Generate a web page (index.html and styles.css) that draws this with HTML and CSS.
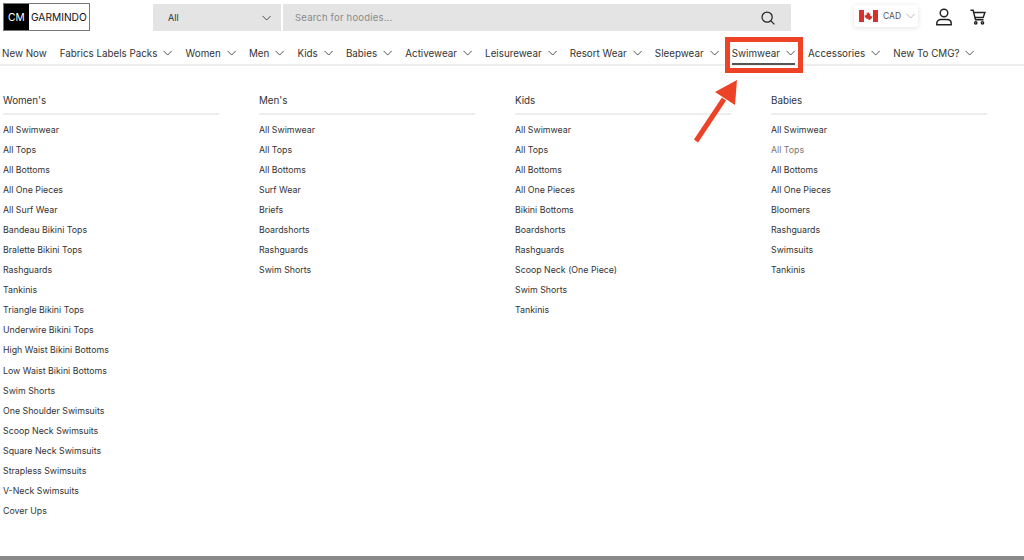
FILE: index.html
```html
<!DOCTYPE html>
<html lang="en">
<head>
  <meta charset="UTF-8" />
  <title>Swimwear menu</title>
  <link rel="stylesheet" href="styles.css">
</head>
<body>
  <svg width="0" height="0" class="defs">
    <symbol id="chev" viewBox="0 0 10 6"><path d="M.6.7 5 5.200 9.400.7" fill="none" stroke="currentColor" stroke-width=".9"/></symbol>
  </svg>

  <header class="top">
    <div class="logo"><span class="logo-cm">CM</span><span class="logo-name">GARMINDO</span></div>
    <div class="search">
      <div class="search-cat">All <svg class="chev"><use href="#chev"/></svg></div>
      <div class="search-box">
        <span>Search for hoodies...</span>
        <svg width="14" height="14" viewBox="0 0 16 16" fill="none" stroke="#222" stroke-width="1.4"><circle cx="7" cy="7" r="5.800"/><path d="m11.300 11.300 4 4"/></svg>
      </div>
    </div>
    <div class="currency">
      <svg width="19" height="12" viewBox="0 0 19 12"><rect width="19" height="12" fill="#fff"/><rect width="5" height="12" fill="#d5312b"/><rect x="14" width="5" height="12" fill="#d5312b"/><path d="M9.500 2.200 10.400 4l1-.5-.4 2.400 1-.4.4.9 1-.2-.4 1.500.4.4-2 .9.2.9-2-.2V10H9.300V8.700l-2 .2.2-.9-2-.9.4-.4-.4-1.500 1 .2.4-.9 1 .4-.4-2.400 1 .5z" fill="#d5312b"/></svg>
      <span>CAD</span>
      <svg class="chev light"><use href="#chev"/></svg>
    </div>
    <svg class="icon-user" width="18" height="18" viewBox="0 0 20 20" fill="none" stroke="#222" stroke-width="1.600"><circle cx="10" cy="5.600" r="4.200"/><path d="M2 18.600v-1.600c0-2.800 2.200-4.200 4.600-4.200h6.800c2.400 0 4.600 1.400 4.600 4.200v1.600z"/></svg>
    <svg class="icon-cart" width="16" height="16" viewBox="0 0 18 18" fill="none" stroke="#222" stroke-width="1.600"><path d="M.5 1.500h3l2.700 10.500h9"/><path d="M4.300 4h12.500l-2 5.500H5.600"/><circle cx="6.500" cy="15.500" r="1.300"/><circle cx="14" cy="15.500" r="1.300"/></svg>
  </header>

  <nav class="nav">
    <a>New Now</a>
    <a>Fabrics Labels Packs <svg class="chev"><use href="#chev"/></svg></a>
    <a>Women <svg class="chev"><use href="#chev"/></svg></a>
    <a>Men <svg class="chev"><use href="#chev"/></svg></a>
    <a>Kids <svg class="chev"><use href="#chev"/></svg></a>
    <a>Babies <svg class="chev"><use href="#chev"/></svg></a>
    <a>Activewear <svg class="chev"><use href="#chev"/></svg></a>
    <a>Leisurewear <svg class="chev"><use href="#chev"/></svg></a>
    <a>Resort Wear <svg class="chev"><use href="#chev"/></svg></a>
    <a>Sleepwear <svg class="chev"><use href="#chev"/></svg></a>
    <a class="active">Swimwear <svg class="chev"><use href="#chev"/></svg></a>
    <a>Accessories <svg class="chev"><use href="#chev"/></svg></a>
    <a>New To CMG? <svg class="chev"><use href="#chev"/></svg></a>
  </nav>

  <main class="menu">
    <section class="col">
      <h3>Women's</h3>
      <ul>
        <li>All Swimwear</li>
        <li>All Tops</li>
        <li>All Bottoms</li>
        <li>All One Pieces</li>
        <li>All Surf Wear</li>
        <li>Bandeau Bikini Tops</li>
        <li>Bralette Bikini Tops</li>
        <li>Rashguards</li>
        <li>Tankinis</li>
        <li>Triangle Bikini Tops</li>
        <li>Underwire Bikini Tops</li>
        <li>High Waist Bikini Bottoms</li>
        <li>Low Waist Bikini Bottoms</li>
        <li>Swim Shorts</li>
        <li>One Shoulder Swimsuits</li>
        <li>Scoop Neck Swimsuits</li>
        <li>Square Neck Swimsuits</li>
        <li>Strapless Swimsuits</li>
        <li>V-Neck Swimsuits</li>
        <li>Cover Ups</li>
      </ul>
    </section>
    <section class="col">
      <h3>Men's</h3>
      <ul>
        <li>All Swimwear</li>
        <li>All Tops</li>
        <li>All Bottoms</li>
        <li>Surf Wear</li>
        <li>Briefs</li>
        <li>Boardshorts</li>
        <li>Rashguards</li>
        <li>Swim Shorts</li>
      </ul>
    </section>
    <section class="col">
      <h3>Kids</h3>
      <ul>
        <li>All Swimwear</li>
        <li>All Tops</li>
        <li>All Bottoms</li>
        <li>All One Pieces</li>
        <li>Bikini Bottoms</li>
        <li>Boardshorts</li>
        <li>Rashguards</li>
        <li>Scoop Neck (One Piece)</li>
        <li>Swim Shorts</li>
        <li>Tankinis</li>
      </ul>
    </section>
    <section class="col">
      <h3>Babies</h3>
      <ul>
        <li>All Swimwear</li>
        <li class="dim">All Tops</li>
        <li>All Bottoms</li>
        <li>All One Pieces</li>
        <li>Bloomers</li>
        <li>Rashguards</li>
        <li>Swimsuits</li>
        <li>Tankinis</li>
      </ul>
    </section>
  </main>

  <div class="footer-bar"></div>

  <!-- annotation over the screenshot -->
  <div class="callout"></div>
  <svg class="arrow" width="50" height="70" viewBox="0 0 50 70"><path d="M3 66 31 24" stroke="#ee4227" stroke-width="5" fill="none"/><path d="M44 5 42 30 22 17z" fill="#ee4227"/></svg>
</body>
</html>
```

FILE: styles.css
```css
* {
  box-sizing: border-box;
}
html, body {
  margin: 0;
  padding: 0;
}
body {
  position: relative;
  width: 1024px;
  height: 560px;
  overflow: hidden;
  background: #fff;
  color: #2f2f2f;
  font-family: Inter, "Liberation Sans", sans-serif;
}
.defs {
  position: absolute;
}
.chev {
  flex: none;
  width: 9.300px;
  height: 6px;
  color: #333;
}
.chev.light {
  color: #aaa;
}

.top {
  display: flex;
  align-items: flex-start;
  height: 38px;
  padding: 3px 0 0 3px;
}
.logo {
  display: flex;
  width: 87px;
  height: 28px;
  border: 1px solid #777;
  font-size: 10.200px;
  line-height: 26px;
  color: #111;
}
.logo-cm {
  width: 25px;
  padding-left: 4px;
  background: #000;
  color: #fff;
}
.logo-name {
  padding-left: 2px;
}
.search {
  display: flex;
  gap: 2px;
  margin: 1px 0 0 63px;
  height: 27px;
}
.search-cat {
  display: flex;
  align-items: center;
  justify-content: space-between;
  width: 128px;
  padding: 0 10px 0 15px;
  background: #e4e4e4;
  font-size: 9px;
}
.search-box {
  display: flex;
  align-items: center;
  justify-content: space-between;
  width: 508px;
  padding: 0 16px 0 12px;
  background: #e4e4e4;
  font-size: 9.500px;
  letter-spacing: .2px;
  color: #8a8a8a;
}
.currency {
  display: flex;
  align-items: center;
  gap: 5px;
  width: 64px;
  height: 22px;
  margin: 2px 0 0 63px;
  padding-left: 5px;
  border-radius: 3px;
  box-shadow: 0 1px 5px rgba(0, 0, 0, .12);
  font-size: 8.500px;
  color: #555;
}
.icon-user {
  margin: 5px 0 0 17px;
}
.icon-cart {
  margin: 6px 0 0 17px;
}

.nav {
  display: flex;
  gap: 12.900px;
  height: 28px;
  padding: 5px 0 0 2px;
  border-bottom: 2px solid #eee;
}
.nav a {
  display: flex;
  align-items: center;
  gap: 6px;
  height: 22px;
  padding-bottom: 2px;
  font-size: 9.800px;
  white-space: nowrap;
  color: #333;
}
.nav a.active {
  padding-bottom: 0;
  border-bottom: 2px solid #555;
}

.menu {
  display: flex;
  padding: 28px 0 0 3px;
}
.col {
  flex: none;
  width: 256px;
}
.col h3 {
  width: 216px;
  height: 21px;
  margin: 0 0 4.950px;
  border-bottom: 2px solid #eee;
  font-size: 9.800px;
  font-weight: 400;
  line-height: 13px;
  color: #333;
}
.col ul {
  margin: 0;
  padding: 0;
  list-style: none;
}
.col li {
  height: 20.050px;
  font-size: 8.800px;
  line-height: 20px;
  color: #333;
}
.col li.dim {
  color: #777;
}

.footer-bar {
  position: absolute;
  left: 0;
  right: 0;
  bottom: 0;
  height: 4px;
  background: #8a8a8a;
}

.callout {
  position: absolute;
  left: 725px;
  top: 37px;
  width: 78px;
  height: 36px;
  border: 5px solid #ee4227;
}
.arrow {
  position: absolute;
  left: 693px;
  top: 75px;
}
```
